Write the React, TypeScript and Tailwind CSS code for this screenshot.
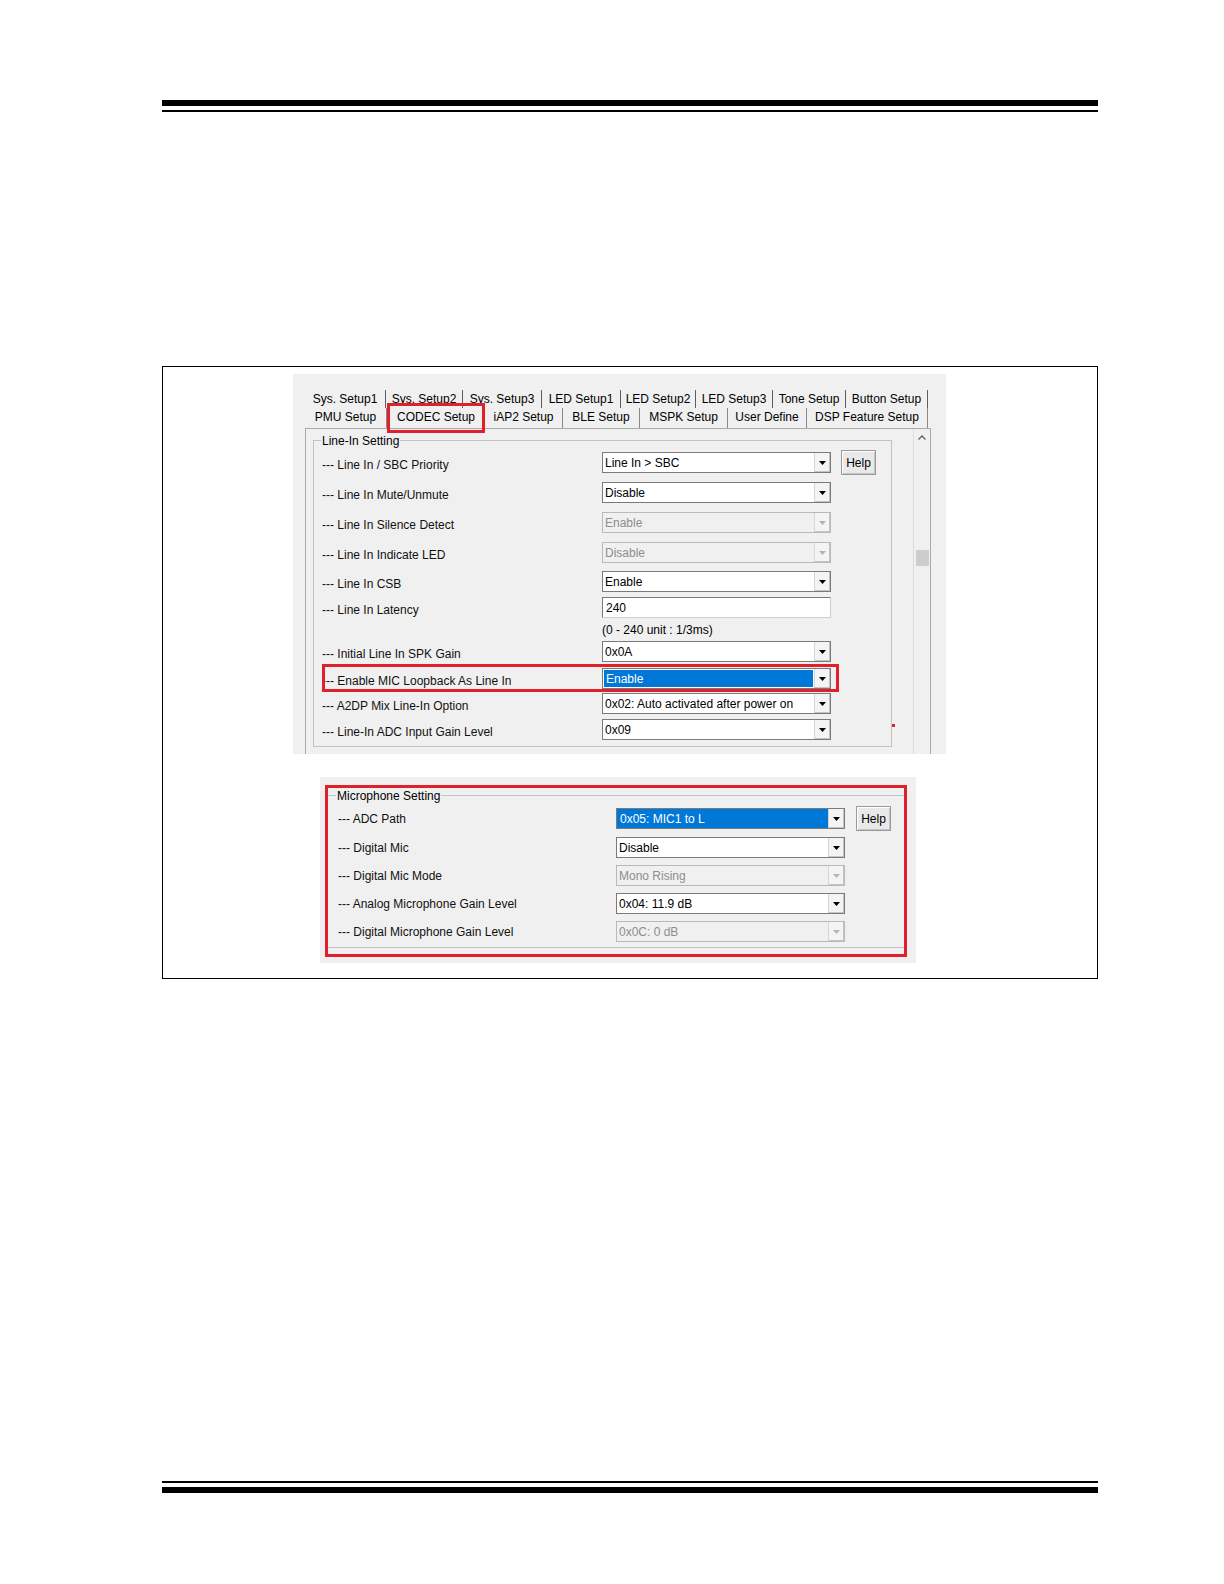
import React from "react";

function DownArrow({ disabled }: { disabled?: boolean }) {
  return (
    <svg width="7" height="4" viewBox="0 0 7 4" aria-hidden="true">
      <polygon points="0,0 7,0 3.5,4" fill={disabled ? "#b4b4b4" : "#000000"} />
    </svg>
  );
}

type ComboProps = { value: string; disabled?: boolean; selected?: "inset" | "fill" };

function Combo({ value, disabled, selected }: ComboProps) {
  const box = disabled ? "bg-[#f0f0f0] border-[#b9b9b9]" : "bg-white border-[#7a7a7a]";
  return (
    <div className={`flex h-[21px] w-[229px] shrink-0 border ${box}`}>
      <div className="flex min-w-0 flex-1 items-stretch">
        {selected === "inset" ? (
          <div className="m-[1px] flex flex-1 items-center bg-[#0078d7] pl-[2px] text-white">{value}</div>
        ) : selected === "fill" ? (
          <div className="flex flex-1 items-center bg-[#0078d7] pl-[3px] text-white">{value}</div>
        ) : (
          <div className={`flex flex-1 items-center pl-[2px] ${disabled ? "text-[#8d8d8d]" : "text-black"}`}>{value}</div>
        )}
      </div>
      <div className="flex w-[16px] shrink-0 items-center justify-center border-l border-[#d6d6d6] bg-[#f4f4f4] shadow-[inset_-1px_-1px_0_#c4c4c4]">
        <DownArrow disabled={disabled} />
      </div>
    </div>
  );
}

function TextBox({ value }: { value: string }) {
  return (
    <div className="flex h-[21px] w-[229px] shrink-0 items-center border border-[#7a7a7a] border-b-[#cfcfcf] border-r-[#cfcfcf] bg-white pl-[3px] text-black">
      {value}
    </div>
  );
}

function HelpButton() {
  return (
    <div className="flex h-[25px] w-[35px] shrink-0 items-center justify-center border border-[#9a9a9a] bg-[#e9e9e9] text-black shadow-[inset_1px_1px_0_#ffffff,inset_-1px_-1px_0_#c4c4c4]">
      Help
    </div>
  );
}

type Row = {
  label: string;
  kind: "combo" | "text" | "hint";
  value: string;
  disabled?: boolean;
  selected?: "inset" | "fill";
  help?: boolean;
  mt: string;
  red?: boolean;
};

const lineInRows: Row[] = [
  { label: "--- Line In / SBC Priority", kind: "combo", value: "Line In > SBC", help: true, mt: "mt-[11px]" },
  { label: "--- Line In Mute/Unmute", kind: "combo", value: "Disable", mt: "mt-[9px]" },
  { label: "--- Line In Silence Detect", kind: "combo", value: "Enable", disabled: true, mt: "mt-[9px]" },
  { label: "--- Line In Indicate LED", kind: "combo", value: "Disable", disabled: true, mt: "mt-[9px]" },
  { label: "--- Line In CSB", kind: "combo", value: "Enable", mt: "mt-[8px]" },
  { label: "--- Line In Latency", kind: "text", value: "240", mt: "mt-[5px]" },
  { label: "", kind: "hint", value: "(0 - 240 unit : 1/3ms)", mt: "mt-[3px]" },
  { label: "--- Initial Line In SPK Gain", kind: "combo", value: "0x0A", mt: "mt-[2px]" },
  { label: "--- Enable MIC Loopback As Line In", kind: "combo", value: "Enable", selected: "inset", mt: "mt-[6px]", red: true },
  { label: "--- A2DP Mix Line-In Option", kind: "combo", value: "0x02: Auto activated after power on", mt: "mt-[4px]" },
  { label: "--- Line-In ADC Input Gain Level", kind: "combo", value: "0x09", mt: "mt-[5px]" },
];

const micRows: Row[] = [
  { label: "--- ADC Path", kind: "combo", value: "0x05: MIC1 to L", selected: "fill", help: true, mt: "mt-[12px]" },
  { label: "--- Digital Mic", kind: "combo", value: "Disable", mt: "mt-[8px]" },
  { label: "--- Digital Mic Mode", kind: "combo", value: "Mono Rising", disabled: true, mt: "mt-[7px]" },
  { label: "--- Analog Microphone Gain Level", kind: "combo", value: "0x04: 11.9 dB", mt: "mt-[7px]" },
  { label: "--- Digital Microphone Gain Level", kind: "combo", value: "0x0C: 0 dB", disabled: true, mt: "mt-[7px]" },
];

const tabsRow1: { t: string; w: string }[] = [
  { t: "Sys. Setup1", w: "w-[81px]" },
  { t: "Sys. Setup2", w: "w-[77px]" },
  { t: "Sys. Setup3", w: "w-[79px]" },
  { t: "LED Setup1", w: "w-[79px]" },
  { t: "LED Setup2", w: "w-[75px]" },
  { t: "LED Setup3", w: "w-[77px]" },
  { t: "Tone Setup", w: "w-[73px]" },
  { t: "Button Setup", w: "w-[82px]" },
];

const tabsRow2: { t: string; w: string; sel?: boolean }[] = [
  { t: "PMU Setup", w: "w-[82px]" },
  { t: "CODEC Setup", w: "w-[98px]", sel: true },
  { t: "iAP2 Setup", w: "w-[78px]" },
  { t: "BLE Setup", w: "w-[77px]" },
  { t: "MSPK Setup", w: "w-[88px]" },
  { t: "User Define", w: "w-[79px]" },
  { t: "DSP Feature Setup", w: "w-[121px]" },
];

function LineInRow({ r }: { r: Row }) {
  if (r.kind === "hint") {
    return (
      <div className={`flex h-[18px] items-center pl-[8px] ${r.mt}`}>
        <div className="w-[280px] shrink-0" />
        <div className="text-black">{r.value}</div>
      </div>
    );
  }
  return (
    <div className={`relative flex h-[21px] items-center pl-[8px] ${r.mt}`}>
      <div className="w-[280px] shrink-0 whitespace-nowrap pt-[4px] text-[#111]">{r.label}</div>
      {r.kind === "text" ? (
        <TextBox value={r.value} />
      ) : (
        <Combo value={r.value} disabled={r.disabled} selected={r.selected} />
      )}
      {r.help ? (
        <div className="ml-[10px]">
          <HelpButton />
        </div>
      ) : null}
      {r.red ? (
        <div className="pointer-events-none absolute left-[8px] top-[-4px] h-[28px] w-[517px] border-[3px] border-[#e0212b]" />
      ) : null}
    </div>
  );
}

function MicRow({ r }: { r: Row }) {
  return (
    <div className={`flex h-[21px] items-center pl-[10px] ${r.mt}`}>
      <div className="w-[278px] shrink-0 whitespace-nowrap text-[#111]">{r.label}</div>
      <Combo value={r.value} disabled={r.disabled} selected={r.selected} />
      {r.help ? (
        <div className="ml-[11px]">
          <HelpButton />
        </div>
      ) : null}
    </div>
  );
}

function LineInScreenshot() {
  return (
    <div className="relative ml-[130px] mt-[7px] h-[380px] w-[653px] overflow-hidden bg-[#f0f0f0] pl-[12px] pt-[16px]">
      <div className="flex h-[18px]">
        {tabsRow1.map((t) => (
          <div key={t.t} className={`${t.w} flex shrink-0 items-center justify-center border-r border-[#5e5e5e] text-black`}>
            {t.t}
          </div>
        ))}
      </div>
      <div className="flex h-[20px]">
        {tabsRow2.map((t) => (
          <div
            key={t.t}
            className={`${t.w} relative flex shrink-0 items-center justify-center pb-[2px] text-black ${t.sel ? "" : "border-r border-[#8a8a8a]"}`}
          >
            {t.t}
            {t.sel ? (
              <div className="pointer-events-none absolute left-0 top-[-5px] h-[30px] w-[98px] border-[3px] border-[#e0212b]" />
            ) : null}
          </div>
        ))}
      </div>
      <div className="flex h-[326px] w-[626px] border-l border-r border-t border-[#a9a9a9]">
        <div className="ml-[7px] mt-[11px]">
          <div className="relative flex h-[307px] w-[579px] flex-col border border-[#c2c2c2]">
            <div className="absolute left-[7px] top-[-7px] bg-[#f0f0f0] px-[1px] leading-[14px] text-black">Line-In Setting</div>
            {lineInRows.map((r, i) => (
              <LineInRow key={i} r={r} />
            ))}
          </div>
        </div>
        <div className="ml-[21px] flex w-[17px] flex-col border-l border-[#dcdcdc]">
          <div className="flex h-[17px] items-center justify-center">
            <svg width="8" height="5" viewBox="0 0 8 5" aria-hidden="true">
              <polyline points="0.5,4.5 4,1 7.5,4.5" fill="none" stroke="#606060" strokeWidth="1.3" />
            </svg>
          </div>
          <div className="mx-auto mt-[104px] h-[16px] w-[13px] bg-[#cdcdcd]" />
        </div>
      </div>
      <div className="absolute left-[599px] top-[350px] h-[3px] w-[3px] bg-[#e0212b]" />
    </div>
  );
}

function MicScreenshot() {
  return (
    <div className="relative ml-[157px] mt-[23px] h-[186px] w-[596px] bg-[#f0f0f0] pl-[7px] pt-[18px]">
      <div className="relative flex h-[153px] w-[578px] flex-col border border-[#c2c2c2]">
        <div className="absolute left-[8px] top-[-7px] bg-[#f0f0f0] px-[1px] leading-[14px] text-black">Microphone Setting</div>
        {micRows.map((r, i) => (
          <MicRow key={i} r={r} />
        ))}
      </div>
      <div className="pointer-events-none absolute left-[5px] top-[8px] h-[172px] w-[582px] border-[3px] border-[#e0212b]" />
    </div>
  );
}

export default function App() {
  return (
    <div className="relative h-[1584px] w-[1224px] bg-white font-['Liberation_Sans',Arial,sans-serif] text-[12px] leading-[14px]">
      <div className="w-[1098px] pl-[162px] pt-[100px]">
        <div className="h-[6px] bg-black" />
        <div className="mt-[4px] h-[2px] bg-black" />
        <div className="mt-[254px] h-[613px] border border-black">
          <LineInScreenshot />
          <MicScreenshot />
        </div>
        <div className="mt-[502px] h-[2px] bg-black" />
        <div className="mt-[4px] h-[6px] bg-black" />
      </div>
    </div>
  );
}
